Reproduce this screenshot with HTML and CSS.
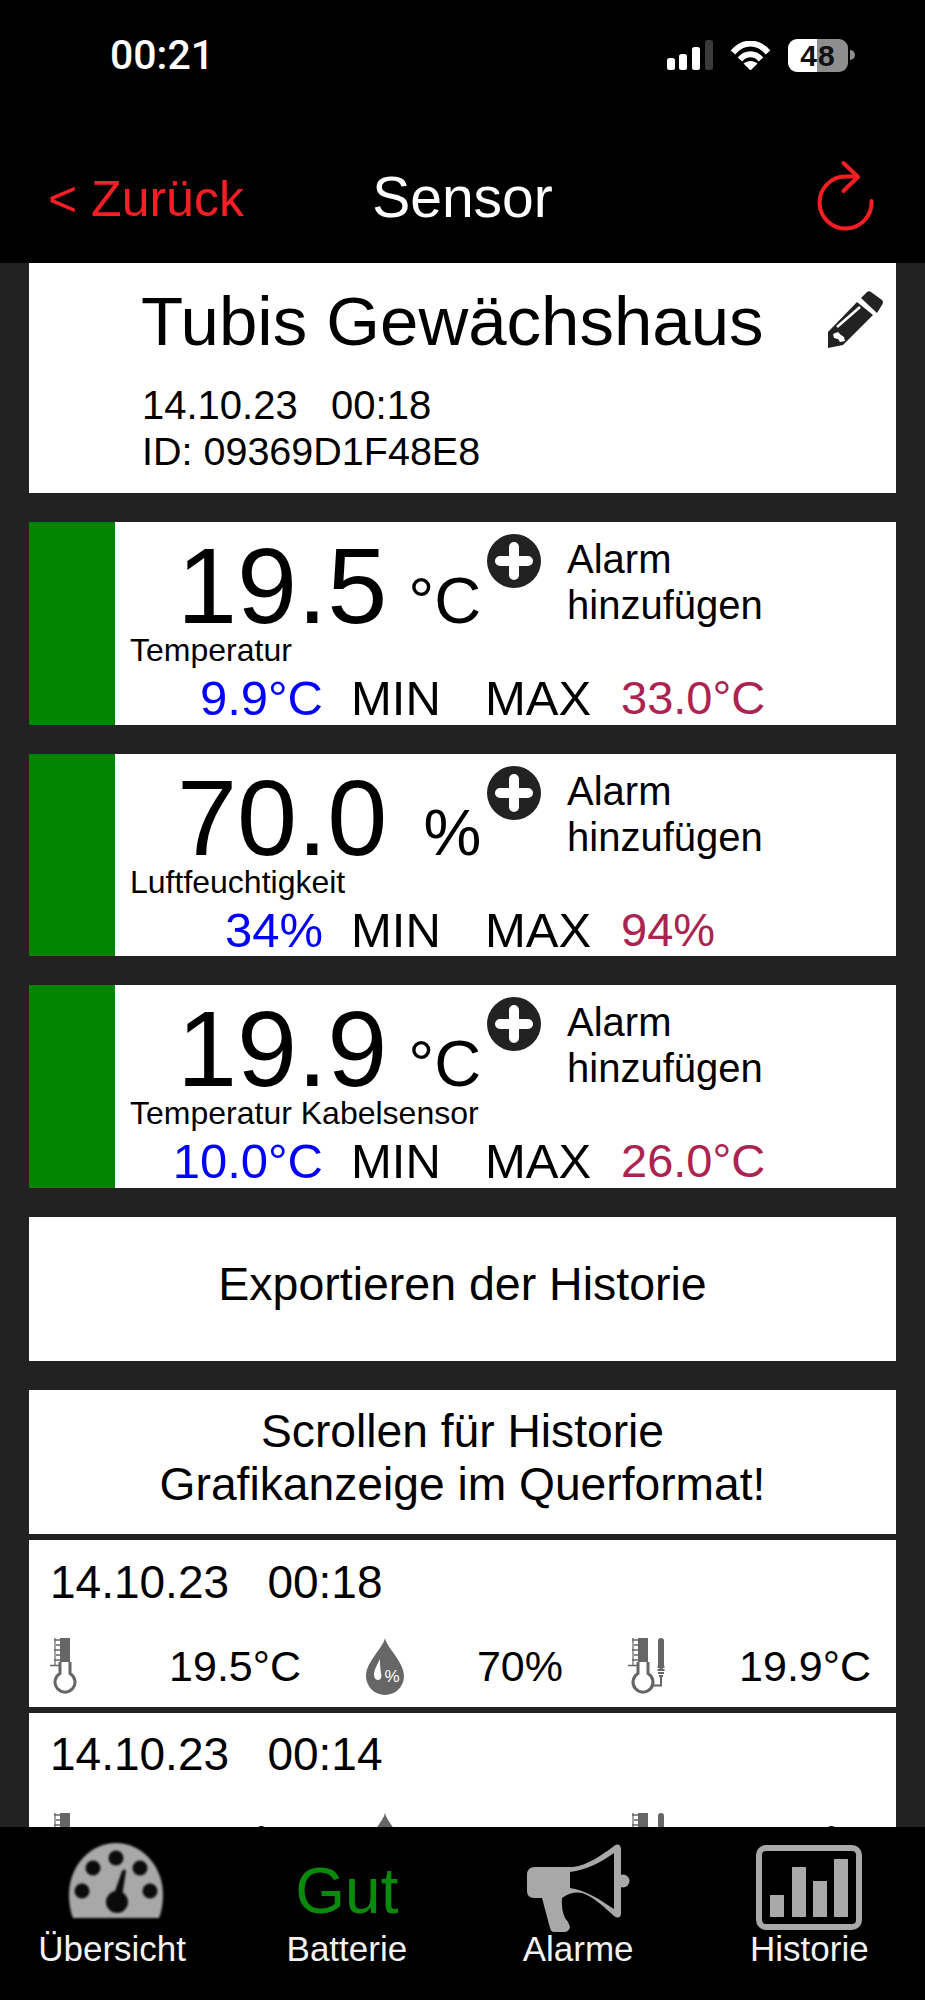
FILE: index.html
```html
<!DOCTYPE html>
<html lang="de">
<head>
<meta charset="utf-8">
<title>Sensor</title>
<link rel="stylesheet" href="styles.css">
</head>
<body>
<svg class="defs" xmlns="http://www.w3.org/2000/svg">
  <symbol id="plus" viewBox="0 0 54 54">
    <circle cx="27" cy="27" r="27" fill="#222"/>
    <path d="M27 13v28M13 27h28" stroke="#fff" stroke-width="10" stroke-linecap="round"/>
  </symbol>
  <symbol id="therm" viewBox="0 0 27 57">
    <path d="M10 0h10v24H10z" fill="#666"/>
    <path d="M10 24v11.500a10 10 0 1 0 10 0V24" fill="none" stroke="#666" stroke-width="3"/>
    <path d="M4 2h6M6 7h4M4 12h6M6 17h4M4 22h6M0 27.500h10" stroke="#666" stroke-width="1.600"/>
    <path d="M5 0v27" stroke="#666" stroke-width="1.200"/>
  </symbol>
  <symbol id="drop" viewBox="0 0 38 57">
    <path d="M19 0C17 10 0 24 0 38a19 19 0 0 0 38 0C38 24 21 10 19 0z" fill="#666"/>
    <path d="M14 21c-3 6-6 11-6 16 0 3 2 5 4 5 3 0 4-3 3-7-.7-4-1-9-1-14z" fill="#fff"/>
    <text class="drop-text" x="26" y="44">%</text>
  </symbol>
  <symbol id="therm2" viewBox="0 0 39 57">
    <path d="M10 0h10v24H10z" fill="#666"/>
    <path d="M10 24v11.500a10 10 0 1 0 10 0V24" fill="none" stroke="#666" stroke-width="3"/>
    <path d="M4 2h6M6 7h4M4 12h6M6 17h4M4 22h6M0 27.500h10" stroke="#666" stroke-width="1.600"/>
    <path d="M5 0v27" stroke="#666" stroke-width="1.200"/>
    <path d="M33 3v25" stroke="#666" stroke-width="6" stroke-linecap="round"/>
    <path d="M29.500 29h7M29.500 32h7M30 35h6M31 38h4" stroke="#666" stroke-width="1.800"/>
    <path d="M33 38v9.500H23" fill="none" stroke="#666" stroke-width="2"/>
  </symbol>
</svg>

<header class="topbar">
  <div class="status">
    <span class="time">00:21</span>
    <div class="status-icons">
      <svg class="signal" viewBox="0 0 46 30" width="46" height="30">
        <rect x="0" y="18" width="8" height="12" rx="2.500" fill="#fff"/>
        <rect x="12" y="14" width="8" height="16" rx="2.500" fill="#fff"/>
        <rect x="25" y="7" width="8" height="23" rx="2.500" fill="#fff"/>
        <rect x="38" y="0" width="8" height="30" rx="2.500" fill="#3a3a3a"/>
      </svg>
      <svg class="wifi" viewBox="0 0 41 29" width="41" height="29">
        <path d="M3 11.500C13-.5 28-.5 38 11.500M10 18.500c6-7 15-7 21 0" fill="none" stroke="#fff" stroke-width="6"/>
        <path d="M13.500 22.500c4-3.500 10-3.500 14 0L20.500 29.500z" fill="#fff"/>
      </svg>
      <span class="battery">48</span>
      <span class="battery-nub"></span>
    </div>
  </div>
  <nav class="nav">
    <a class="back">&lt; Zurück</a>
    <span class="nav-title">Sensor</span>
    <svg class="refresh" viewBox="0 0 90 85" width="90" height="85">
      <path d="M71.500 47A26 26 0 1 1 45.500 22.500H57" fill="none" stroke="#f81e24" stroke-width="4" stroke-linecap="round"/>
      <path d="M43.500 9L58 23L43.500 37" fill="none" stroke="#f81e24" stroke-width="4" stroke-linecap="round" stroke-linejoin="round"/>
    </svg>
  </nav>
</header>

<main class="content">
  <section class="card device">
    <div class="device-head">
      <h1 class="device-name">Tubis Gewächshaus</h1>
      <svg class="pencil" viewBox="0 0 80 80" width="80" height="80">
        <path d="M46 18l6-6q2-1.500 4 0l11 8q2 2 .5 4L62 33z" fill="#222"/>
        <path d="M42 22L58 35L28 65L13 68V52z" fill="#222"/>
        <path d="M22 47L45 27" stroke="#fff" stroke-width="2.500"/>
        <path d="M18 54l5-2 3 3 3 2 1 4-5 1-2-3-4-1z" fill="#fff"/>
      </svg>
    </div>
    <p class="device-meta">14.10.23   00:18</p>
    <p class="device-meta device-id">ID: 09369D1F48E8</p>
  </section>

  <section class="card metric">
    <div class="metric-bar"></div>
    <div class="metric-body">
      <div class="reading">
        <div class="reading-main"><span class="value">19.5</span><span class="unit">°C</span></div>
        <svg class="plus" width="54" height="54"><use href="#plus"/></svg>
        <div class="alarm">Alarm<br>hinzufügen</div>
      </div>
      <div class="metric-label">Temperatur</div>
      <div class="range">
        <span class="range-min">9.9°C</span><span class="range-name">MIN</span><span>MAX</span><span class="range-max">33.0°C</span>
      </div>
    </div>
  </section>

  <section class="card metric">
    <div class="metric-bar"></div>
    <div class="metric-body">
      <div class="reading">
        <div class="reading-main"><span class="value">70.0</span><span class="unit">%</span></div>
        <svg class="plus" width="54" height="54"><use href="#plus"/></svg>
        <div class="alarm">Alarm<br>hinzufügen</div>
      </div>
      <div class="metric-label">Luftfeuchtigkeit</div>
      <div class="range">
        <span class="range-min">34%</span><span class="range-name">MIN</span><span>MAX</span><span class="range-max">94%</span>
      </div>
    </div>
  </section>

  <section class="card metric">
    <div class="metric-bar"></div>
    <div class="metric-body">
      <div class="reading">
        <div class="reading-main"><span class="value">19.9</span><span class="unit">°C</span></div>
        <svg class="plus" width="54" height="54"><use href="#plus"/></svg>
        <div class="alarm">Alarm<br>hinzufügen</div>
      </div>
      <div class="metric-label">Temperatur Kabelsensor</div>
      <div class="range">
        <span class="range-min">10.0°C</span><span class="range-name">MIN</span><span>MAX</span><span class="range-max">26.0°C</span>
      </div>
    </div>
  </section>

  <section class="card export">Exportieren der Historie</section>

  <section class="card notice">Scrollen für Historie<br>Grafikanzeige im Querformat!</section>

  <section class="card history">
    <div class="history-date">14.10.23   00:18</div>
    <div class="history-row">
      <div class="cell cell-a"><svg width="27" height="57"><use href="#therm"/></svg><span>19.5°C</span></div>
      <div class="cell cell-b"><svg width="38" height="57"><use href="#drop"/></svg><span>70%</span></div>
      <div class="cell cell-c"><svg width="39" height="57"><use href="#therm2"/></svg><span>19.9°C</span></div>
    </div>
  </section>

  <section class="card history history-next">
    <div class="history-date">14.10.23   00:14</div>
    <div class="history-row">
      <div class="cell cell-a"><svg width="27" height="57"><use href="#therm"/></svg><span>19.5°C</span></div>
      <div class="cell cell-b"><svg width="38" height="57"><use href="#drop"/></svg><span>70%</span></div>
      <div class="cell cell-c"><svg width="39" height="57"><use href="#therm2"/></svg><span>19.9°C</span></div>
    </div>
  </section>
</main>

<footer class="tabbar">
  <div class="tab tab-first">
    <svg class="tab-icon gauge" viewBox="0 0 130 100" width="130" height="100">
      <path d="M22 83Q18 73 18 60C18 30 40 8 65 8S112 30 112 60Q112 73 108 83z" fill="#a8a8a8"/>
      <g fill="#0b0b0b">
        <circle cx="65" cy="23" r="7.500"/><circle cx="42" cy="33" r="7.500"/><circle cx="89" cy="33" r="7.500"/>
        <circle cx="31" cy="56" r="7.500"/><circle cx="99" cy="56" r="7.500"/><circle cx="66" cy="67" r="11"/>
        <path d="M62 62L71 36q3-3 4 0L71 62z"/>
      </g>
    </svg>
    <span class="tab-label">Übersicht</span>
  </div>
  <div class="tab">
    <div class="tab-status">Gut</div>
    <span class="tab-label">Batterie</span>
  </div>
  <div class="tab">
    <svg class="tab-icon" viewBox="3 0 130 100" width="130" height="100">
      <circle cx="113" cy="46" r="6.500" fill="#a8a8a8"/>
      <path fill-rule="evenodd" fill="#a8a8a8" d="M17 40Q17 32 25 32H63C78 30 92 20 104 11Q110 7 111 14V79Q110 85 104 81C94 72 84 62 72 58Q62 56 52 63Q51 74 55 83Q59 87 60 92Q59 97 54 97H44Q41 97 40 93L32 63H24Q17 63 17 56zM60 37V53C76 55 92 66 104 74V18C92 27 76 35 60 37z"/>
    </svg>
    <span class="tab-label">Alarme</span>
  </div>
  <div class="tab">
    <svg class="tab-icon" viewBox="4 0 130 100" width="130" height="100">
      <rect x="19" y="13" width="100" height="79" rx="7" fill="none" stroke="#a8a8a8" stroke-width="6"/>
      <g fill="#a8a8a8">
        <rect x="30" y="60" width="14" height="22"/><rect x="52" y="32" width="14" height="50"/>
        <rect x="73" y="46" width="14" height="36"/><rect x="94" y="24" width="14" height="58"/>
      </g>
    </svg>
    <span class="tab-label">Historie</span>
  </div>
</footer>
</body>
</html>
```

FILE: styles.css
```css
* { box-sizing: border-box; }
html, body { margin: 0; padding: 0; }
body {
  width: 925px;
  height: 2000px;
  display: flex;
  flex-direction: column;
  overflow: hidden;
  background: #222;
  color: #000;
  font-family: "Liberation Sans", Arial, sans-serif;
}
.defs { display: none; }
.drop-text { font-family: "Liberation Sans", sans-serif; font-size: 17px; fill: #fff; text-anchor: middle; }

.topbar { background: #000; height: 263px; flex: none; }
.status { height: 112px; display: flex; justify-content: space-between; align-items: center; padding: 0 70px 2px 110px; }
.time { color: #fff; font-family: Roboto, sans-serif; font-weight: 500; font-size: 41px; }
.status-icons { display: flex; align-items: center; }
.wifi { margin-left: 17px; }
.battery {
  margin-left: 17px;
  width: 60px;
  height: 33px;
  border-radius: 9px;
  background: linear-gradient(90deg, #fff 48%, #8e8e8e 48%);
  color: #111;
  font-weight: 700;
  font-size: 30px;
  letter-spacing: 1px;
  line-height: 33px;
  text-align: center;
}
.battery-nub { margin-left: 2px; width: 5px; height: 10px; border-radius: 0 5px 5px 0; background: #8e8e8e; }

.nav { height: 151px; display: grid; grid-template-columns: 1fr auto 1fr; align-items: center; padding: 18px 35px 0; }
.back { color: #f81e24; font-size: 50px; margin: 4px 0 0 13px; }
.nav-title { color: #fff; font-size: 57px; }
.refresh { justify-self: end; }

.content { flex: 1; min-height: 0; overflow: hidden; padding: 0 29px; display: flex; flex-direction: column; }
.card { background: #fff; flex: none; }

.device { height: 230px; margin-bottom: 29px; padding: 17px 1px 0 112px; }
.device-head { display: flex; justify-content: space-between; height: 80px; margin-bottom: 22px; }
.device-name { margin: 0; font-weight: 400; font-size: 69px; line-height: 84px; white-space: nowrap; }
.device-meta { margin: 0 0 0 1px; font-size: 40px; line-height: 46px; white-space: pre; }
.device-id { font-size: 39.500px; }

.metric { height: 202.5px; margin-bottom: 29px; display: flex; }
.metric-bar { width: 86px; background: #008500; flex: none; }
.metric-body { flex: 1; display: flex; flex-direction: column; }
.reading { height: 113px; display: flex; align-items: flex-start; padding-left: 62px; }
.reading-main { display: flex; align-items: baseline; margin-top: 19px; width: 310px; }
.value { font-size: 108px; line-height: 90px; }
.unit { font-size: 65px; line-height: 64px; width: 94px; text-align: right; white-space: nowrap; }
.plus { margin-top: 12px; flex: none; }
.alarm { margin: 14px 0 0 26px; font-size: 40px; line-height: 46px; }
.metric-label { padding-left: 15px; font-size: 32px; line-height: 30px; margin-bottom: 8px; white-space: nowrap; }
.range { display: grid; grid-template-columns: 208px 162px 136px auto; font-size: 49px; line-height: 50px; }
.range-name { margin-left: 28px; }
.range-min { color: #0000ff; text-align: right; }
.range-max { color: #ab2350; font-size: 47px; }

.export { height: 144px; margin-bottom: 29px; display: flex; align-items: center; justify-content: center; font-size: 46.500px; padding-bottom: 10px; }
.notice { height: 144.500px; margin-bottom: 6px; padding-top: 15px; font-size: 46.200px; line-height: 53px; text-align: center; }

.history { height: 167px; margin-bottom: 6px; padding: 16px 25px 0 21px; }
.history-date { font-size: 46px; line-height: 52px; white-space: pre; height: 52px; margin-bottom: 30px; }
.history-row { display: grid; grid-template-columns: 251px 197px 243px; column-gap: 65px; }
.cell { display: flex; justify-content: space-between; align-items: center; font-size: 43px; line-height: 57px; }
.history-next { padding-top: 15px; }
.history-next .history-date { margin-bottom: 33px; }

.tabbar { height: 173px; flex: none; background: #000; display: grid; grid-template-columns: repeat(4, 1fr); padding-top: 8px; }
.tab { display: flex; flex-direction: column; align-items: center; color: #f2f2f2; }
.tab-icon { display: block; }
.gauge { filter: blur(1px); }
.tab-label { font-size: 35px; line-height: 40px; margin-top: -6px; }
.tab-first .tab-label { margin-right: 7px; }
.tab-status { height: 100px; padding-top: 9px; color: #0a8a0a; font-size: 64px; line-height: 94px; }
```
